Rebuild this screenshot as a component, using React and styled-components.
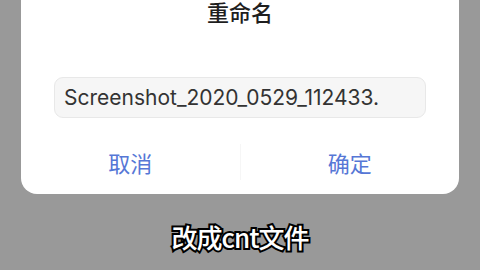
import React from 'react';
import styled, { createGlobalStyle } from 'styled-components';

const GlobalStyle = createGlobalStyle`
  html, body {
    margin: 0;
    padding: 0;
    background: #999999;
    width: 480px;
    height: 270px;
    overflow: hidden;
    font-family: Inter, "Noto Sans CJK SC", sans-serif;
  }
`;

const Screen = styled.div`
  display: flex;
  flex-direction: column;
  align-items: center;
  width: 480px;
  height: 270px;
  background: #999999;
`;

const Dialog = styled.div`
  width: 438px;
  background: #ffffff;
  border-radius: 0 0 16px 16px;
  display: flex;
  flex-direction: column;
  align-items: stretch;
`;

const Title = styled.div`
  height: 26px;
  line-height: 22px;
  text-align: center;
  font-family: "Noto Sans CJK SC", sans-serif;
  font-size: 22px;
  font-weight: 500;
  color: #1e1e1e;
`;

const NameInput = styled.div`
  margin: 51px 33px 0;
  height: 41px;
  box-sizing: border-box;
  border: 1px solid #e8e8e8;
  border-radius: 9px;
  background: #f6f6f6;
  display: flex;
  align-items: center;
  padding-left: 9px;
  font-family: Inter, "Noto Sans CJK SC", sans-serif;
  font-size: 21px;
  color: #333333;
  white-space: nowrap;
  overflow: hidden;
`;

const Actions = styled.div`
  display: flex;
  padding: 20px 0 8px;
  height: 48px;
`;

const Action = styled.button`
  flex: 1;
  background: none;
  border: none;
  padding: 0;
  font-family: "Noto Sans CJK SC", sans-serif;
  font-size: 22px;
  color: #5677d6;
  cursor: pointer;
`;

const Divider = styled.div`
  width: 1px;
  margin: 6px 0;
  background: #f6f6f6;
`;

const Caption = styled.div`
  margin-top: 28px;
  height: 30px;
  line-height: 30px;
  font-family: "Noto Sans CJK SC", sans-serif;
  font-size: 26px;
  font-weight: 500;
  color: #ffffff;
  -webkit-text-stroke: 4px #000000;
  paint-order: stroke fill;
  letter-spacing: -1px;
`;

export default function App() {
  return (
    <>
      <GlobalStyle />
      <Screen>
        <Dialog>
          <Title>重命名</Title>
          <NameInput>Screenshot_2020_0529_112433.</NameInput>
          <Actions>
            <Action type="button">取消</Action>
            <Divider />
            <Action type="button">确定</Action>
          </Actions>
        </Dialog>
        <Caption>改成cnt文件</Caption>
      </Screen>
    </>
  );
}
